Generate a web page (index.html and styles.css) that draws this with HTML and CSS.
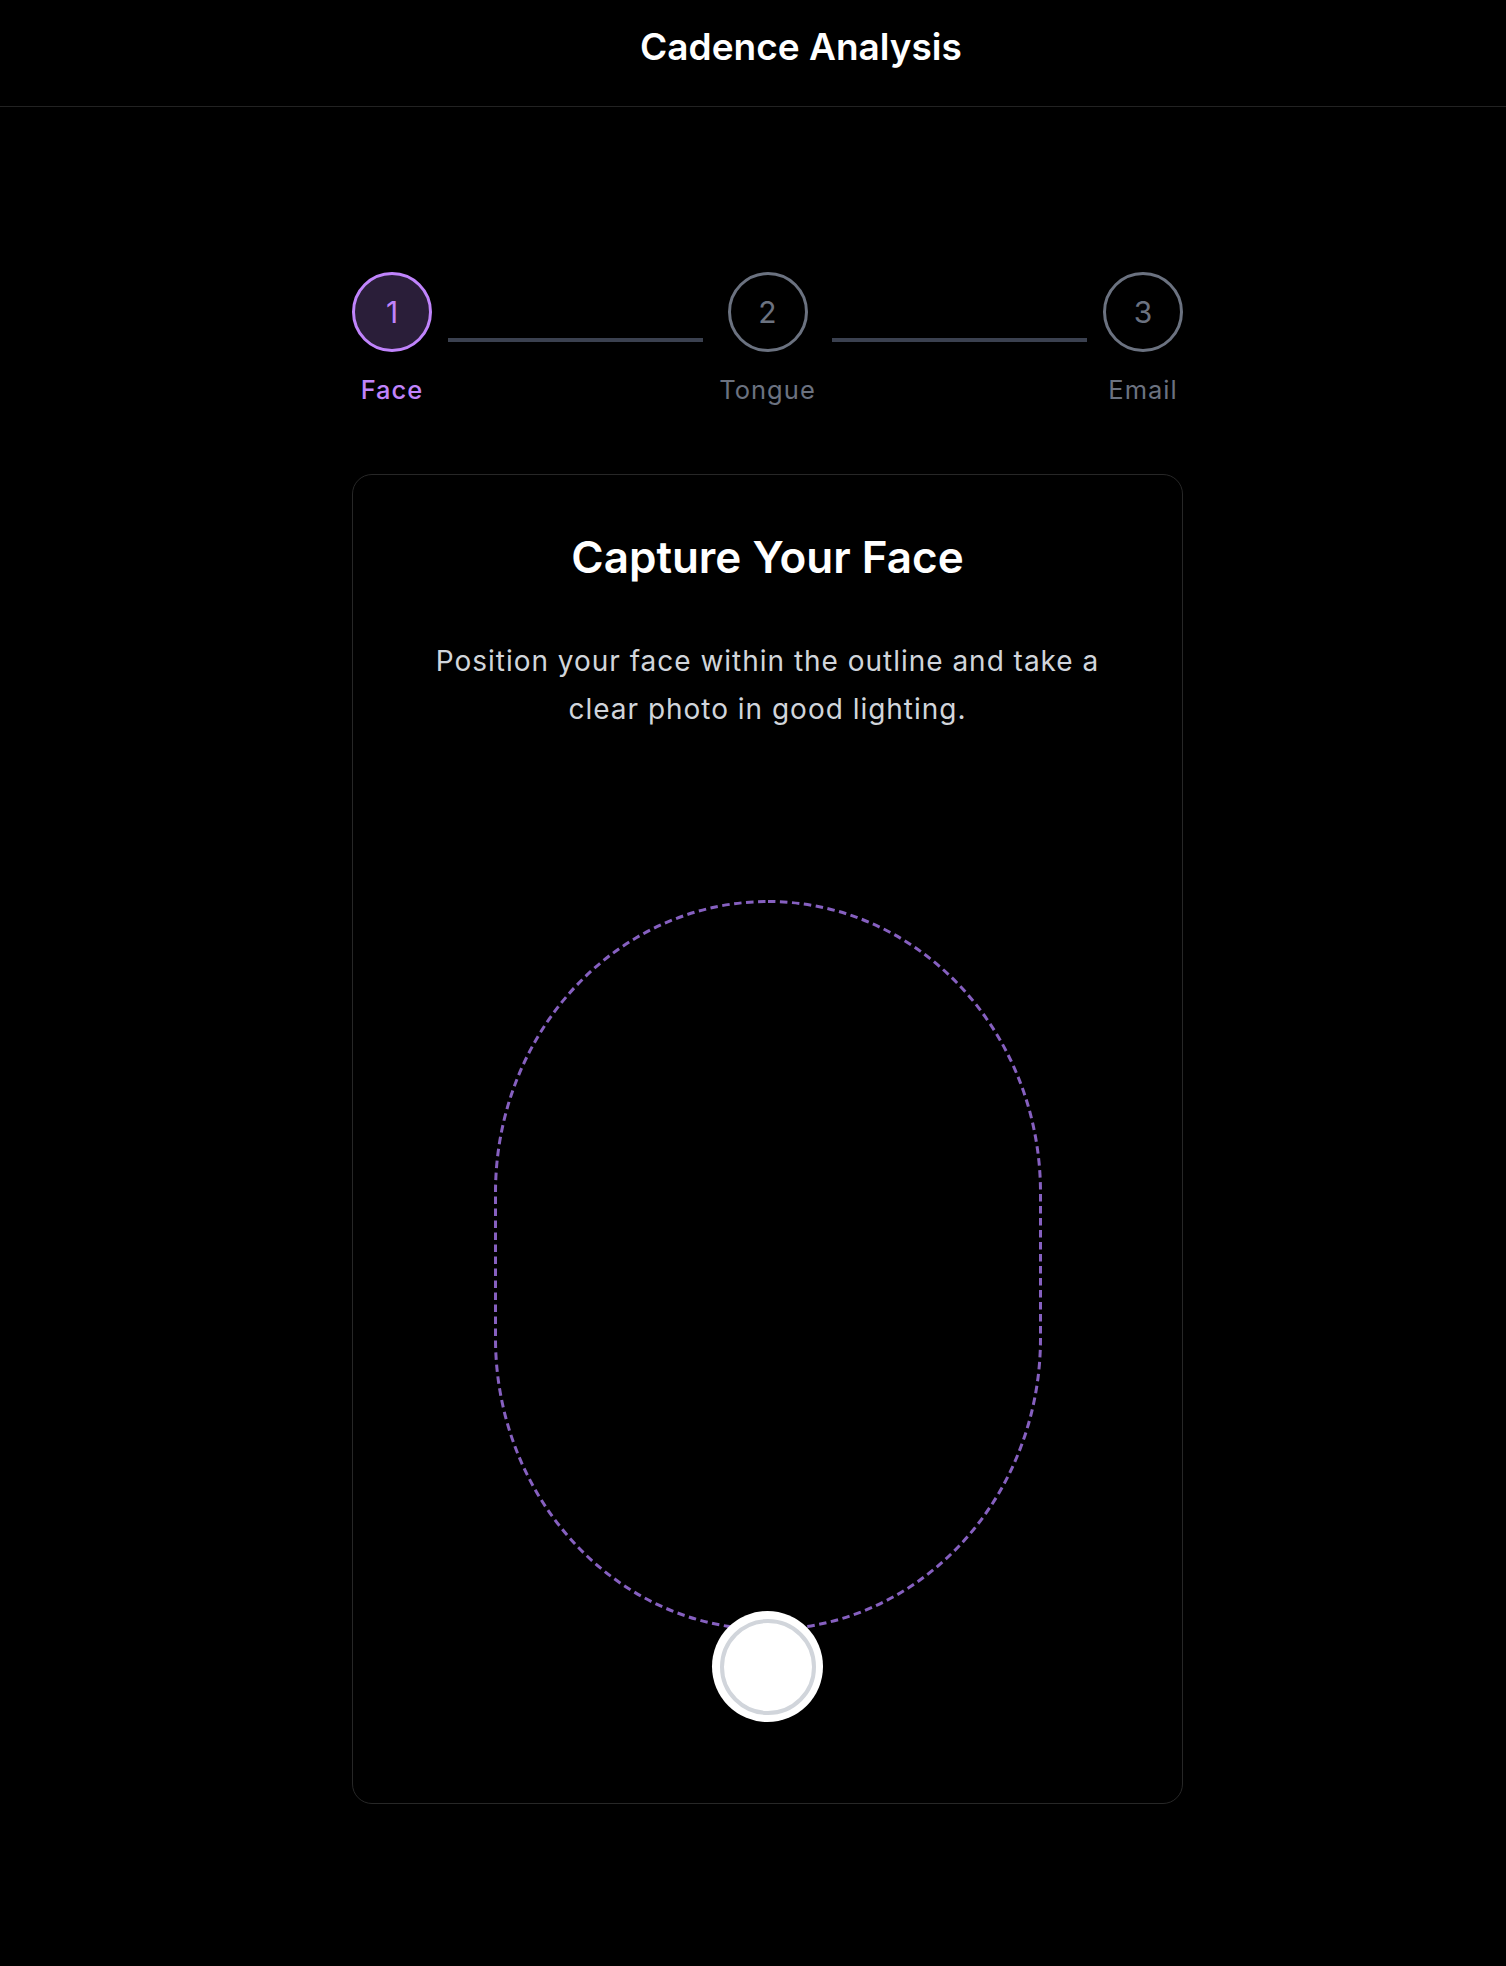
FILE: index.html
```html
<!DOCTYPE html>
<html lang="en">
<head>
<meta charset="utf-8">
<title>Cadence Analysis</title>
<link rel="stylesheet" href="styles.css">
</head>
<body>
<header class="topbar">
  <h1 class="app-title">Cadence Analysis</h1>
</header>
<main class="main">
  <div class="stepper">
    <div class="step step-active">
      <div class="step-circle">1</div>
      <div class="step-label">Face</div>
    </div>
    <div class="step-line"></div>
    <div class="step">
      <div class="step-circle">2</div>
      <div class="step-label">Tongue</div>
    </div>
    <div class="step-line"></div>
    <div class="step">
      <div class="step-circle">3</div>
      <div class="step-label">Email</div>
    </div>
  </div>

  <section class="card">
    <h2 class="card-title">Capture Your Face</h2>
    <p class="card-text">Position your face within the outline and take a clear photo in good lighting.</p>
    <div class="camera">
      <svg class="face-guide" width="548" height="731" viewBox="0 0 548 731" aria-hidden="true">
        <rect x="1.5" y="1.5" width="545" height="728" rx="272.5" ry="291" fill="none" stroke="#8660c0" stroke-width="3" stroke-dasharray="7.5 4.5"/>
      </svg>
      <button class="shutter" type="button" aria-label="Take photo"><span class="shutter-inner"></span></button>
    </div>
  </section>
</main>
</body>
</html>
```

FILE: styles.css
```css
* { box-sizing: border-box; }

html, body {
  margin: 0;
  padding: 0;
  background: #000;
}

body {
  min-height: 1966px;
  font-family: Inter, "Noto Sans", "Liberation Sans", sans-serif;
  color: #fff;
}

.topbar {
  height: 107px;
  display: flex;
  justify-content: center;
  align-items: flex-start;
  padding: 24px 0 0 96px;
  border-bottom: 1px solid #222;
}

.app-title {
  margin: 0;
  font-size: 37px;
  line-height: 46px;
  font-weight: 600;
  color: #fff;
}

.main {
  width: 831px;
  margin-left: 352px;
  padding-top: 165px;
}

.stepper {
  display: flex;
  align-items: center;
}

.step {
  display: flex;
  flex-direction: column;
  align-items: center;
}

.step-circle {
  width: 80px;
  height: 80px;
  border-radius: 50%;
  border: 3px solid #6b7280;
  display: flex;
  align-items: center;
  justify-content: center;
  font-size: 30px;
  font-weight: 400;
  color: #6b7280;
}

.step-label {
  margin-top: 20px;
  font-size: 25.5px;
  line-height: 35px;
  letter-spacing: 0.04em;
  color: #6b7280;
}

.step-active .step-circle {
  border-color: #c084fc;
  background: #2a1e39;
  color: #c084fc;
}

.step-active .step-label {
  color: #c084fc;
  font-weight: 500;
}

.step-line {
  flex: 1;
  height: 4px;
  margin: 0 16px;
  background: #3b4150;
}

.card {
  margin-top: 67px;
  border: 1px solid #272727;
  border-radius: 20px;
  padding: 57px 50px 81px;
  display: flex;
  flex-direction: column;
  align-items: center;
  text-align: center;
}

.card-title {
  margin: 0;
  font-size: 44px;
  line-height: 50px;
  font-weight: 600;
  color: #fff;
}

.card-text {
  margin: 55px 0 0;
  font-size: 28px;
  line-height: 48px;
  letter-spacing: 0.035em;
  color: #d1d5db;
}

.camera {
  margin-top: 167px;
  display: flex;
  flex-direction: column;
  align-items: center;
}

.face-guide {
  display: block;
}

.shutter {
  margin-top: -20px;
  width: 111px;
  height: 111px;
  border-radius: 50%;
  border: none;
  padding: 0;
  background: #fff;
  display: flex;
  align-items: center;
  justify-content: center;
  position: relative;
  cursor: pointer;
}

.shutter-inner {
  width: 96px;
  height: 96px;
  border-radius: 50%;
  border: 4px solid #d1d5db;
  background: #fff;
}
```
